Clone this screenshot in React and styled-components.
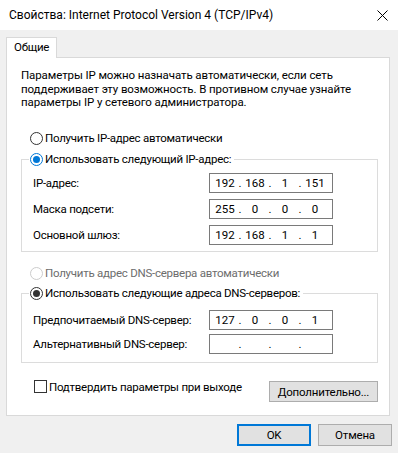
import React from 'react';
import styled, { createGlobalStyle } from 'styled-components';

const Global = createGlobalStyle`
  html, body { margin: 0; padding: 0; background: #f0f0f0; }
  body {
    font-family: Roboto, "Liberation Sans", sans-serif;
    font-size: 11.5px;
    letter-spacing: -0.25px;
    color: #000;
  }
  * { box-sizing: border-box; }
`;

const Window = styled.div`
  width: 398px;
  height: 453px;
  background: #f0f0f0;
  display: flex;
  flex-direction: column;
  overflow: hidden;
`;

const TitleBar = styled.div`
  height: 30px;
  flex: 0 0 30px;
  background: #fff;
  display: flex;
  align-items: center;
  justify-content: space-between;
  padding: 0 10px 0 9px;
`;

const Title = styled.div`
  font-size: 12px;
  letter-spacing: 0;
  line-height: 16px;
`;

const Body = styled.div`
  padding: 7px 0 0 6px;
  display: flex;
  flex-direction: column;
`;

const TabStrip = styled.div`
  display: flex;
`;

const Tab = styled.div`
  width: 51px;
  height: 21px;
  border: 1px solid #d9d9d9;
  border-bottom: none;
  background: #fff;
  padding-left: 7px;
  line-height: 19px;
  margin-bottom: -1px;
  position: relative;
  z-index: 1;
`;

const Panel = styled.div`
  width: 384px;
  height: 359px;
  border: 1px solid #d9d9d9;
  background: #fff;
  padding: 11px 0 0 14px;
  display: flex;
  flex-direction: column;
`;

const Description = styled.div`
  line-height: 13.5px;
  letter-spacing: -0.1px;
`;

const RadioRow = styled.label`
  display: flex;
  align-items: center;
  height: 16px;
  line-height: 16px;
  margin-top: ${p => p.$mt || 0}px;
  margin-left: ${p => p.$ml ?? 9}px;
  color: ${p => (p.$disabled ? '#6d6d6d' : '#000')};
  white-space: nowrap;
`;

const RadioCircle = styled.span`
  width: 13px;
  height: 13px;
  flex: 0 0 13px;
  border-radius: 50%;
  border: 1px solid ${p => p.$color};
  background: #fff;
  display: flex;
  align-items: center;
  justify-content: center;
  margin-right: 2px;
  &::after {
    content: '';
    display: ${p => (p.$checked ? 'block' : 'none')};
    width: 7px;
    height: 7px;
    border-radius: 50%;
    background: ${p => p.$color};
  }
`;

const Radio = ({ checked, disabled, accent, children, mt, ml }) => {
  const color = disabled ? '#cccccc' : accent ? '#0078d7' : '#333333';
  return (
    <RadioRow $mt={mt} $ml={ml} $disabled={disabled}>
      <RadioCircle $color={color} $checked={checked} />
      {children}
    </RadioRow>
  );
};

const Group = styled.fieldset`
  margin: ${p => p.$mt || 0}px 0 0 0;
  padding: 0 0 ${p => p.$pb}px 0;
  width: 357px;
  min-inline-size: 0;
  border: 1px solid #dcdcdc;
  display: flex;
  flex-direction: column;
`;

const Legend = styled.legend`
  padding: 0 3px 0 1px;
  margin-left: 7px;
`;

const Rows = styled.div`
  display: flex;
  flex-direction: column;
  gap: ${p => p.$gap}px;
  margin-top: ${p => p.$mt}px;
`;

const FieldRow = styled.div`
  display: flex;
  align-items: center;
  height: 20px;
  padding-left: 11px;
`;

const FieldLabel = styled.div`
  flex: 0 0 176px;
  white-space: nowrap;
`;

const IpBox = styled.div`
  width: 124px;
  height: ${p => p.$h || 20}px;
  border: 1px solid #7a7a7a;
  background: #fff;
  display: flex;
  align-items: center;
  padding-left: 2px;
  letter-spacing: 0;
`;

const Octet = styled.span`
  width: 26px;
  text-align: center;
`;

const Dot = styled.span`
  width: 4px;
  text-align: center;
`;

const IpField = ({ value, h }) => {
  const parts = value ? value.split('.') : ['', '', '', ''];
  return (
    <IpBox $h={h}>
      {parts.map((p, i) => (
        <React.Fragment key={i}>
          <Octet>{p}</Octet>
          {i < 3 && <Dot>.</Dot>}
        </React.Fragment>
      ))}
    </IpBox>
  );
};

const BottomRow = styled.div`
  width: 357px;
  display: flex;
  justify-content: space-between;
  align-items: flex-start;
  margin-top: 17px;
`;

const CheckRow = styled.label`
  display: flex;
  align-items: center;
  margin-left: 13px;
  height: 13px;
  white-space: nowrap;
`;

const CheckBox = styled.span`
  width: 13px;
  height: 13px;
  flex: 0 0 13px;
  border: 1px solid #333;
  background: #fff;
  margin-right: 2px;
`;

const Button = styled.button`
  font-family: Roboto, "Liberation Sans", sans-serif;
  font-size: 11.5px;
  letter-spacing: -0.2px;
  color: #000;
  background: #e1e1e1;
  border: ${p => (p.$default ? '2px solid #0078d7' : '1px solid #adadad')};
  width: ${p => p.$w}px;
  height: ${p => p.$h}px;
  margin-top: ${p => p.$mt || 0}px;
  padding: 0;
  display: flex;
  align-items: center;
  justify-content: center;
`;

const Footer = styled.div`
  display: flex;
  justify-content: flex-end;
  gap: 7px;
  padding-right: 6px;
  margin-top: 8px;
`;

const CloseIcon = () => (
  <svg width="11" height="11" viewBox="0 0 11 11">
    <path d="M0.5 0.5L10.5 10.5M10.5 0.5L0.5 10.5" stroke="#000" strokeWidth="1" />
  </svg>
);

export default function App() {
  return (
    <>
      <Global />
      <Window>
        <TitleBar>
          <Title>Свойства: Internet Protocol Version 4 (TCP/IPv4)</Title>
          <CloseIcon />
        </TitleBar>
        <Body>
          <TabStrip>
            <Tab>Общие</Tab>
          </TabStrip>
          <Panel>
            <Description>
              Параметры IP можно назначать автоматически, если сеть
              <br />
              поддерживает эту возможность. В противном случае узнайте
              <br />
              параметры IP у сетевого администратора.
            </Description>
            <Radio mt={20.5}>Получить IP-адрес автоматически</Radio>
            <Group $mt={5} $pb={6}>
              <Legend>
                <Radio checked accent ml={0}>Использовать следующий IP-адрес:</Radio>
              </Legend>
              <Rows $gap={6} $mt={6}>
                <FieldRow>
                  <FieldLabel>IP-адрес:</FieldLabel>
                  <IpField value="192.168.1.151" />
                </FieldRow>
                <FieldRow>
                  <FieldLabel>Маска подсети:</FieldLabel>
                  <IpField value="255.0.0.0" />
                </FieldRow>
                <FieldRow>
                  <FieldLabel>Основной шлюз:</FieldLabel>
                  <IpField value="192.168.1.1" />
                </FieldRow>
              </Rows>
            </Group>
            <Radio mt={13} disabled>Получить адрес DNS-сервера автоматически</Radio>
            <Group $mt={4} $pb={8}>
              <Legend>
                <Radio checked ml={0}>Использовать следующие адреса DNS-серверов:</Radio>
              </Legend>
              <Rows $gap={4} $mt={9}>
                <FieldRow>
                  <FieldLabel>Предпочитаемый DNS-сервер:</FieldLabel>
                  <IpField value="127.0.0.1" />
                </FieldRow>
                <FieldRow>
                  <FieldLabel>Альтернативный DNS-сервер:</FieldLabel>
                  <IpField value="" />
                </FieldRow>
              </Rows>
            </Group>
            <BottomRow>
              <CheckRow>
                <CheckBox />
                Подтвердить параметры при выходе
              </CheckRow>
              <Button $w={109} $h={21} $mt={1}>Дополнительно...</Button>
            </BottomRow>
          </Panel>
        </Body>
        <Footer>
          <Button $default $w={74} $h={22}>OK</Button>
          <Button $w={74} $h={22}>Отмена</Button>
        </Footer>
      </Window>
    </>
  );
}
